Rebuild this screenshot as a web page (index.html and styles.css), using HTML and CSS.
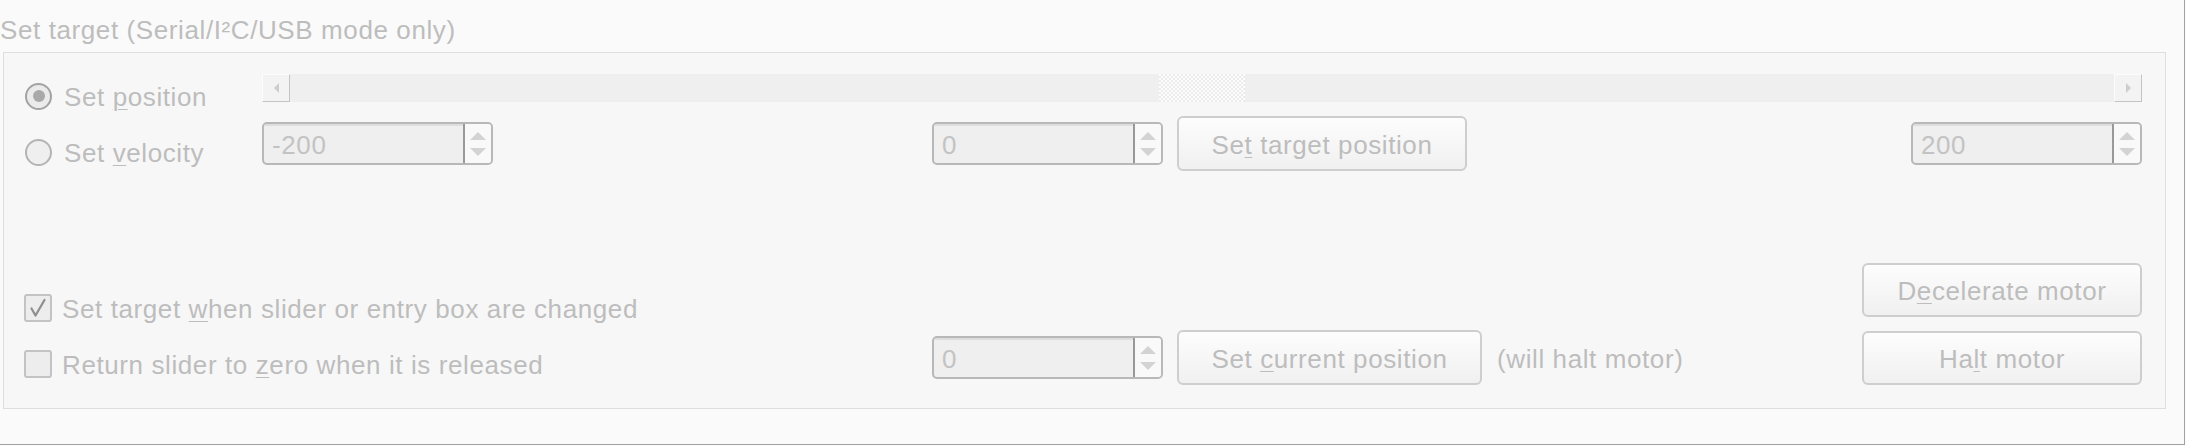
FILE: index.html
```html
<!DOCTYPE html>
<html>
<head>
<meta charset="utf-8">
<link rel="stylesheet" href="styles.css">
</head>
<body>
<div class="window">
  <div class="title">Set target (Serial/I²C/USB mode only)</div>
  <div class="group">
    <label class="radio r1"><span class="rb on"></span><span class="txt">Set <u>p</u>osition</span></label>
    <div class="slider">
      <div class="sarrow"><span class="tri-left"></span></div>
      <div class="track"><div class="handle"></div></div>
      <div class="sarrow"><span class="tri-right"></span></div>
    </div>

    <label class="radio r2"><span class="rb"></span><span class="txt">Set <u>v</u>elocity</span></label>
    <div class="spin sp-a"><span class="val">-200</span><span class="arr"><i class="up"></i><i class="dn"></i></span></div>
    <div class="spin sp-b"><span class="val">0</span><span class="arr"><i class="up"></i><i class="dn"></i></span></div>
    <div class="btn btn-target"><span class="txt">Se<u>t</u> target position</span></div>
    <div class="spin sp-c"><span class="val">200</span><span class="arr"><i class="up"></i><i class="dn"></i></span></div>

    <label class="check c1"><span class="cb"><svg width="24" height="24" viewBox="0 0 24 24"><path d="M5.5 12.5 L9.5 19.5 L18.5 4" fill="none" stroke="#8e8e8e" stroke-width="2.2" stroke-linecap="round" stroke-linejoin="round"/></svg></span><span class="txt">Set target <u>w</u>hen slider or entry box are changed</span></label>
    <div class="btn btn-decel"><span class="txt">D<u>e</u>celerate motor</span></div>

    <label class="check c2"><span class="cb"></span><span class="txt">Return slider to <u>z</u>ero when it is released</span></label>
    <div class="spin sp-d"><span class="val">0</span><span class="arr"><i class="up"></i><i class="dn"></i></span></div>
    <div class="current">
      <div class="btn btn-current"><span class="txt">Set <u>c</u>urrent position</span></div>
      <span class="note txt">(will halt motor)</span>
    </div>
    <div class="btn btn-halt"><span class="txt">Ha<u>l</u>t motor</span></div>
  </div>
</div>
</body>
</html>
```

FILE: styles.css
```css
* { box-sizing: border-box; }

body {
  margin: 0;
  background: #fafafa;
  font-family: "Liberation Sans", Arial, sans-serif;
  font-size: 26px;
  letter-spacing: 0.6px;
  color: #bdbdbd;
}

u {
  text-decoration: underline;
  text-decoration-thickness: 1px;
  text-underline-offset: 3px;
}

.txt { padding-top: 3px; white-space: pre; }

.window {
  width: 2185px;
  height: 445px;
  padding-top: 15px;
  border-right: 1px solid #a2a2a2;
  border-bottom: 1px solid #a2a2a2;
  background: #fafafa;
}

.title {
  height: 30px;
  line-height: 30px;
  white-space: nowrap;
}

.group {
  margin: 7px 0 0 3px;
  width: 2163px;
  height: 357px;
  border: 1px solid #dedede;
  background: #f7f7f7;
  display: grid;
  grid-template-columns: 258px 670px 245px 685px 280px;
  grid-template-rows: 36px 62px 88px 66px 62px;
  padding: 21px 23px 20px 0;
}

.group > * { align-self: start; }

/* radios */
.radio {
  display: flex;
  align-items: center;
  gap: 12px;
  height: 28px;
  margin-left: 21px;
  white-space: nowrap;
}
.radio .txt { padding-top: 2px; }
.r1 { grid-row: 1; grid-column: 1; margin-top: 8px; }
.r2 { grid-row: 2; grid-column: 1; margin-top: 28px; }

.rb {
  width: 27px;
  height: 27px;
  flex: none;
  border-radius: 50%;
  border: 2px solid #b4b4b4;
  background: #efefef;
  display: flex;
  align-items: center;
  justify-content: center;
}
.rb.on { border-color: #a3a3a3; background: #ebebeb; }
.rb.on::after {
  content: "";
  width: 12px;
  height: 12px;
  border-radius: 50%;
  background: #a9a9a9;
}

/* slider */
.slider {
  grid-row: 1;
  grid-column: 2 / 6;
  height: 28px;
  display: flex;
  background: #efefef;
}
.sarrow {
  width: 28px;
  height: 28px;
  flex: none;
  background: #f3f3f3;
  border-top: 1px solid #fcfcfc;
  border-left: 1px solid #fcfcfc;
  border-right: 1px solid #c4c4c4;
  border-bottom: 1px solid #c4c4c4;
  display: flex;
  align-items: center;
  justify-content: center;
}
.tri-left {
  width: 0; height: 0;
  border-top: 5px solid transparent;
  border-bottom: 5px solid transparent;
  border-right: 5px solid #cdcdcd;
}
.tri-right {
  width: 0; height: 0;
  border-top: 5px solid transparent;
  border-bottom: 5px solid transparent;
  border-left: 5px solid #cdcdcd;
}
.track {
  flex: 1;
  display: flex;
  justify-content: center;
}
.handle {
  width: 86px;
  height: 28px;
  background: repeating-conic-gradient(#ebebeb 0 25%, #fdfdfd 0 50%) 0 0 / 4px 4px;
}

/* spin boxes */
.spin {
  width: 231px;
  height: 43px;
  display: flex;
  border: 2px solid #b8b8b8;
  border-radius: 5px;
  background: #efefef;
  overflow: hidden;
  margin-top: 12px;
}
.spin .val {
  flex: 1;
  padding: 2px 0 0 8px;
  line-height: 39px;
  color: #c3c3c3;
  box-shadow: inset 0 2px 0 #dddddd;
}
.spin .arr {
  width: 28px;
  flex: none;
  border-left: 2px solid #999999;
  background: #f9f9f9;
  display: flex;
  flex-direction: column;
  align-items: center;
  justify-content: center;
  gap: 8px;
}
.arr .up {
  width: 0; height: 0;
  border-left: 8px solid transparent;
  border-right: 8px solid transparent;
  border-bottom: 8px solid #d3d3d3;
}
.arr .dn {
  width: 0; height: 0;
  border-left: 8px solid transparent;
  border-right: 8px solid transparent;
  border-top: 8px solid #d3d3d3;
}
.sp-a { grid-row: 2; grid-column: 2; }
.sp-b { grid-row: 2; grid-column: 3; }
.sp-c { grid-row: 2; grid-column: 5; justify-self: end; }
.sp-d { grid-row: 5; grid-column: 3; margin-top: 10px; }

/* buttons */
.btn {
  height: 55px;
  border: 2px solid #cecece;
  border-radius: 6px;
  background: linear-gradient(#fdfdfd, #f0f0f0);
  display: flex;
  align-items: center;
  justify-content: center;
  white-space: nowrap;
  color: #bdbdbd;
}
.btn-target { grid-row: 2; grid-column: 4; width: 290px; margin-top: 6px; }
.btn-decel { grid-row: 4; grid-column: 5; width: 280px; height: 54px; margin-top: 3px; }
.btn-halt { grid-row: 5; grid-column: 5; width: 280px; height: 54px; margin-top: 5px; }

.current {
  grid-row: 5;
  grid-column: 4;
  display: flex;
  align-items: center;
  margin-top: 4px;
}
.btn-current { width: 305px; }
.note { margin-left: 15px; white-space: nowrap; }

/* checkboxes */
.check {
  display: flex;
  align-items: center;
  gap: 10px;
  height: 28px;
  margin-left: 20px;
  white-space: nowrap;
  grid-column: 1 / 3;
}
.check .txt { padding-top: 2px; }
.c1 { grid-row: 4; margin-top: 34px; }
.c2 { grid-row: 5; margin-top: 24px; }

.cb {
  width: 28px;
  height: 28px;
  flex: none;
  border: 2px solid #c3c3c3;
  border-radius: 3px;
  background: #ededed;
  display: flex;
  align-items: center;
  justify-content: center;
}
.cb svg { display: block; }
```
